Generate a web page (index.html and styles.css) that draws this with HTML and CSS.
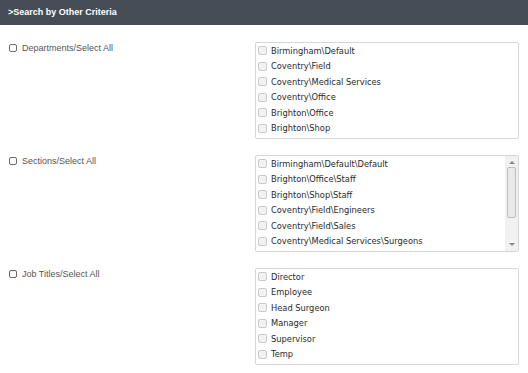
FILE: index.html
```html
<!DOCTYPE html>
<html lang="en">
<head>
    <meta charset="UTF-8">
    <title>Search by Other Criteria</title>
    <link rel="stylesheet" href="styles.css">
</head>
<body>
    <div class="panel-head">&gt;Search by Other Criteria</div>

    <div class="criteria">
        <div class="crit-row">
            <label class="select-all"><input type="checkbox" class="chk"> Departments/Select All</label>
            <div class="pick-box">
                <ul class="pick-list">
                    <li><span class="mini-chk"></span>Birmingham\Default</li>
                    <li><span class="mini-chk"></span>Coventry\Field</li>
                    <li><span class="mini-chk"></span>Coventry\Medical Services</li>
                    <li><span class="mini-chk"></span>Coventry\Office</li>
                    <li><span class="mini-chk"></span>Brighton\Office</li>
                    <li><span class="mini-chk"></span>Brighton\Shop</li>
                </ul>
            </div>
        </div>

        <div class="crit-row">
            <label class="select-all"><input type="checkbox" class="chk"> Sections/Select All</label>
            <div class="pick-box">
                <ul class="pick-list">
                    <li><span class="mini-chk"></span>Birmingham\Default\Default</li>
                    <li><span class="mini-chk"></span>Brighton\Office\Staff</li>
                    <li><span class="mini-chk"></span>Brighton\Shop\Staff</li>
                    <li><span class="mini-chk"></span>Coventry\Field\Engineers</li>
                    <li><span class="mini-chk"></span>Coventry\Field\Sales</li>
                    <li><span class="mini-chk"></span>Coventry\Medical Services\Surgeons</li>
                </ul>
                <div class="scroll-bar">
                    <span class="arrow up"></span>
                    <span class="thumb"></span>
                    <span class="arrow down"></span>
                </div>
            </div>
        </div>

        <div class="crit-row">
            <label class="select-all"><input type="checkbox" class="chk"> Job Titles/Select All</label>
            <div class="pick-box">
                <ul class="pick-list">
                    <li><span class="mini-chk"></span>Director</li>
                    <li><span class="mini-chk"></span>Employee</li>
                    <li><span class="mini-chk"></span>Head Surgeon</li>
                    <li><span class="mini-chk"></span>Manager</li>
                    <li><span class="mini-chk"></span>Supervisor</li>
                    <li><span class="mini-chk"></span>Temp</li>
                </ul>
            </div>
        </div>
    </div>
</body>
</html>
```

FILE: styles.css
```css
body{
    margin: 0;
    background-color: #fff;
    font-family: "Liberation Sans", Arial, sans-serif;
}

.panel-head{
    height: 25px;
    line-height: 25px;
    padding-left: 8px;
    background-color: #474d56;
    color: #fff;
    font-size: 9px;
    font-weight: 700;
}

.criteria{
    padding-top: 17px;
}

.crit-row{
    display: grid;
    grid-template-columns: 255px 264px;
    height: 113px;
}

.select-all{
    display: flex;
    align-items: center;
    gap: 5px;
    height: 12px;
    padding-left: 9px;
    font-size: 9px;
    color: #555;
}

.chk{
    appearance: none;
    margin: 0;
    width: 8px;
    height: 8px;
    border: 1px solid #6a6a6a;
    border-radius: 2px;
    background: #fff;
}

.pick-box{
    display: flex;
    height: 97px;
    box-sizing: border-box;
    border: 1px solid #d6d6d6;
    border-radius: 2px;
    overflow: hidden;
}

.pick-list{
    flex: 1;
    list-style: none;
    margin: 0;
    padding: 0 0 0 2px;
    font-family: "DejaVu Sans", Verdana, sans-serif;
    font-size: 8.3px;
    color: #2a2a2a;
}

.pick-list li{
    display: flex;
    align-items: center;
    height: 15.5px;
    white-space: nowrap;
}

.mini-chk{
    width: 7px;
    height: 7px;
    margin-right: 4px;
    border: 1px solid #c9c9c9;
    border-radius: 2px;
    background: #f2f2f2;
}

.scroll-bar{
    display: flex;
    flex-direction: column;
    align-items: center;
    width: 13px;
    background: #f1f1f1;
}

.arrow{
    width: 0;
    height: 0;
    border-left: 3px solid transparent;
    border-right: 3px solid transparent;
}

.arrow.up{
    margin-top: 5px;
    border-bottom: 3px solid #8a8a8a;
}

.arrow.down{
    margin-top: auto;
    margin-bottom: 5px;
    border-top: 3px solid #8a8a8a;
}

.thumb{
    width: 9px;
    height: 51px;
    margin-top: 3px;
    box-sizing: border-box;
    border: 1px solid #bdbdbd;
    border-radius: 2px;
    background: #e9e9e9;
}
```
